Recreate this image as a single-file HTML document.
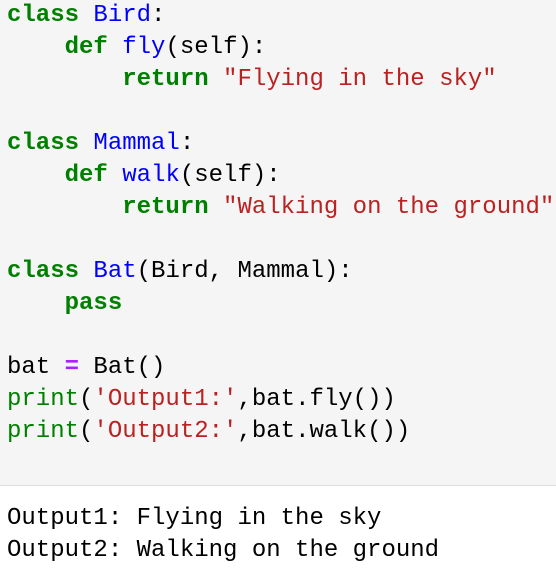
<!DOCTYPE html>
<html><head><style>
html,body{margin:0;padding:0;width:556px;height:572px;overflow:hidden;background:#fff}
pre{margin:0;font-family:"Liberation Mono",monospace;font-size:24px;line-height:32px;color:#000}
.code{background:#f5f5f5;height:486px;border-bottom:1px solid #ddd;padding:0 0 0 7px;box-sizing:border-box}
.code pre{position:relative;top:0px}
.out pre{position:absolute;left:7px;top:503px}
.k{color:#008000;font-weight:bold}
.n{color:#0000ff}
.s{color:#ba2121}
.o{color:#aa22ff;font-weight:bold}
.b{color:#008000}
</style></head><body>
<div class="code"><pre><span class="k">class</span> <span class="n">Bird</span>:
    <span class="k">def</span> <span class="n">fly</span>(self):
        <span class="k">return</span> <span class="s">"Flying in the sky"</span>

<span class="k">class</span> <span class="n">Mammal</span>:
    <span class="k">def</span> <span class="n">walk</span>(self):
        <span class="k">return</span> <span class="s">"Walking on the ground"</span>

<span class="k">class</span> <span class="n">Bat</span>(Bird, Mammal):
    <span class="k">pass</span>

bat <span class="o">=</span> Bat()
<span class="b">print</span>(<span class="s">'Output1:'</span>,bat.fly())
<span class="b">print</span>(<span class="s">'Output2:'</span>,bat.walk())</pre></div>
<div class="out"><pre>Output1: Flying in the sky
Output2: Walking on the ground</pre></div>
</body></html>
